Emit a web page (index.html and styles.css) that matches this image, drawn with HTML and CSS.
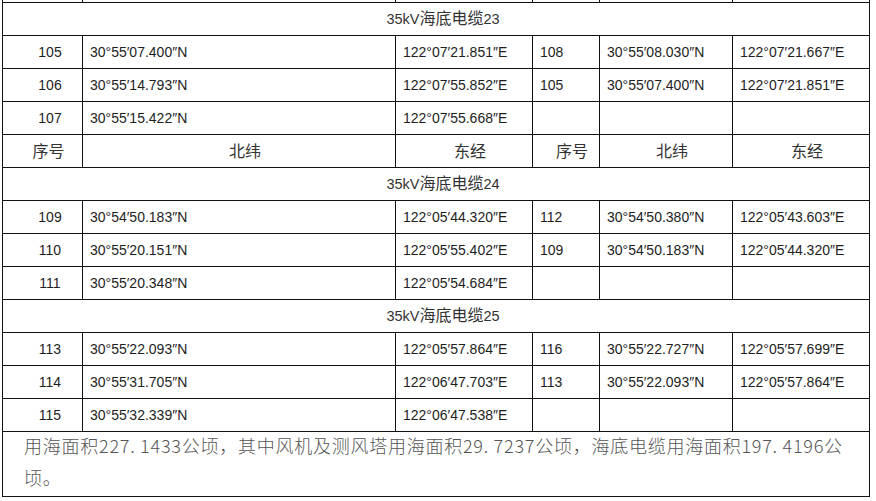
FILE: index.html
```html
<!DOCTYPE html>
<html lang="zh">
<head>
<meta charset="utf-8">
<title>坐标表</title>
<link rel="stylesheet" href="styles.css">
</head>
<body>
<div class="wrap">
<table class="coords">
<colgroup>
<col class="c1"><col class="c2"><col class="c3"><col class="c4"><col class="c5"><col class="c6">
</colgroup>
<tbody>
<tr class="prev"><td></td><td></td><td></td><td></td><td></td><td></td></tr>
<tr><td colspan="6" class="sec"><span class="lat">35kV</span>海底电缆<span class="lat">23</span></td></tr>
<tr><td class="num">105</td><td>30°55′07.400″N</td><td>122°07′21.851″E</td><td>108</td><td>30°55′08.030″N</td><td>122°07′21.667″E</td></tr>
<tr><td class="num">106</td><td>30°55′14.793″N</td><td>122°07′55.852″E</td><td>105</td><td>30°55′07.400″N</td><td>122°07′21.851″E</td></tr>
<tr><td class="num">107</td><td>30°55′15.422″N</td><td>122°07′55.668″E</td><td></td><td></td><td></td></tr>
<tr class="head"><td>序号</td><td>北纬</td><td>东经</td><td>序号</td><td>北纬</td><td>东经</td></tr>
<tr><td colspan="6" class="sec"><span class="lat">35kV</span>海底电缆<span class="lat">24</span></td></tr>
<tr><td class="num">109</td><td>30°54′50.183″N</td><td>122°05′44.320″E</td><td>112</td><td>30°54′50.380″N</td><td>122°05′43.603″E</td></tr>
<tr><td class="num">110</td><td>30°55′20.151″N</td><td>122°05′55.402″E</td><td>109</td><td>30°54′50.183″N</td><td>122°05′44.320″E</td></tr>
<tr><td class="num">111</td><td>30°55′20.348″N</td><td>122°05′54.684″E</td><td></td><td></td><td></td></tr>
<tr><td colspan="6" class="sec"><span class="lat">35kV</span>海底电缆<span class="lat">25</span></td></tr>
<tr><td class="num">113</td><td>30°55′22.093″N</td><td>122°05′57.864″E</td><td>116</td><td>30°55′22.727″N</td><td>122°05′57.699″E</td></tr>
<tr><td class="num">114</td><td>30°55′31.705″N</td><td>122°06′47.703″E</td><td>113</td><td>30°55′22.093″N</td><td>122°05′57.864″E</td></tr>
<tr><td class="num">115</td><td>30°55′32.339″N</td><td>122°06′47.538″E</td><td></td><td></td><td></td></tr>
<tr><td colspan="6" class="note"><div class="line">用海面积227. 1433公顷，其中风机及测风塔用海面积29. 7237公顷，海底电缆用海面积197. 4196公</div><div class="line">顷。</div></td></tr>
</tbody>
</table>
</div>
</body>
</html>
```

FILE: styles.css
```css
html, body {
  margin: 0;
  padding: 0;
  background: #ffffff;
}

.wrap {
  padding-left: 2px;
  overflow: hidden;
  height: 501px;
}

.coords {
  margin-top: -30px;
  border-collapse: separate;
  border-spacing: 0;
  table-layout: fixed;
  width: 868px;
  border-left: 1px solid #111;
  font-family: "Liberation Sans", "DejaVu Sans", "Noto Sans CJK SC", sans-serif;
  font-size: 14px;
  color: #1e1e1e;
}

.c1 { width: 80px; }
.c2 { width: 313px; }
.c3 { width: 137px; }
.c4 { width: 67px; }
.c5 { width: 133px; }
.c6 { width: 137px; }

.coords td {
  box-sizing: border-box;
  height: 33px;
  padding: 0 0 0 7px;
  line-height: 18px;
  border-right: 1px solid #111;
  border-bottom: 1px solid #111;
  white-space: nowrap;
  overflow: hidden;
  text-align: left;
  vertical-align: middle;
}

.coords td.num {
  text-align: center;
  padding-left: 15px;
}

.coords td.sec {
  text-align: center;
  padding: 0 0 3px 14px;
  font-family: "Noto Sans CJK SC", sans-serif;
  font-size: 16px;
  color: #333;
}

.lat {
  font-family: "Liberation Sans", sans-serif;
  font-size: 14.5px;
}

.coords .head td {
  text-align: center;
  padding: 0 0 3px 12px;
  font-family: "Noto Sans CJK SC", sans-serif;
  font-size: 16px;
  color: #333;
}

.coords td.note {
  height: 65px;
  padding-left: 21px;
  font-family: "Noto Sans CJK SC", sans-serif;
  font-weight: 300;
  font-size: 18px;
  letter-spacing: 0.75px;
  color: #555;
  vertical-align: top;
}

.note .line {
  height: 32px;
  line-height: 26px;
  overflow: hidden;
}
```
